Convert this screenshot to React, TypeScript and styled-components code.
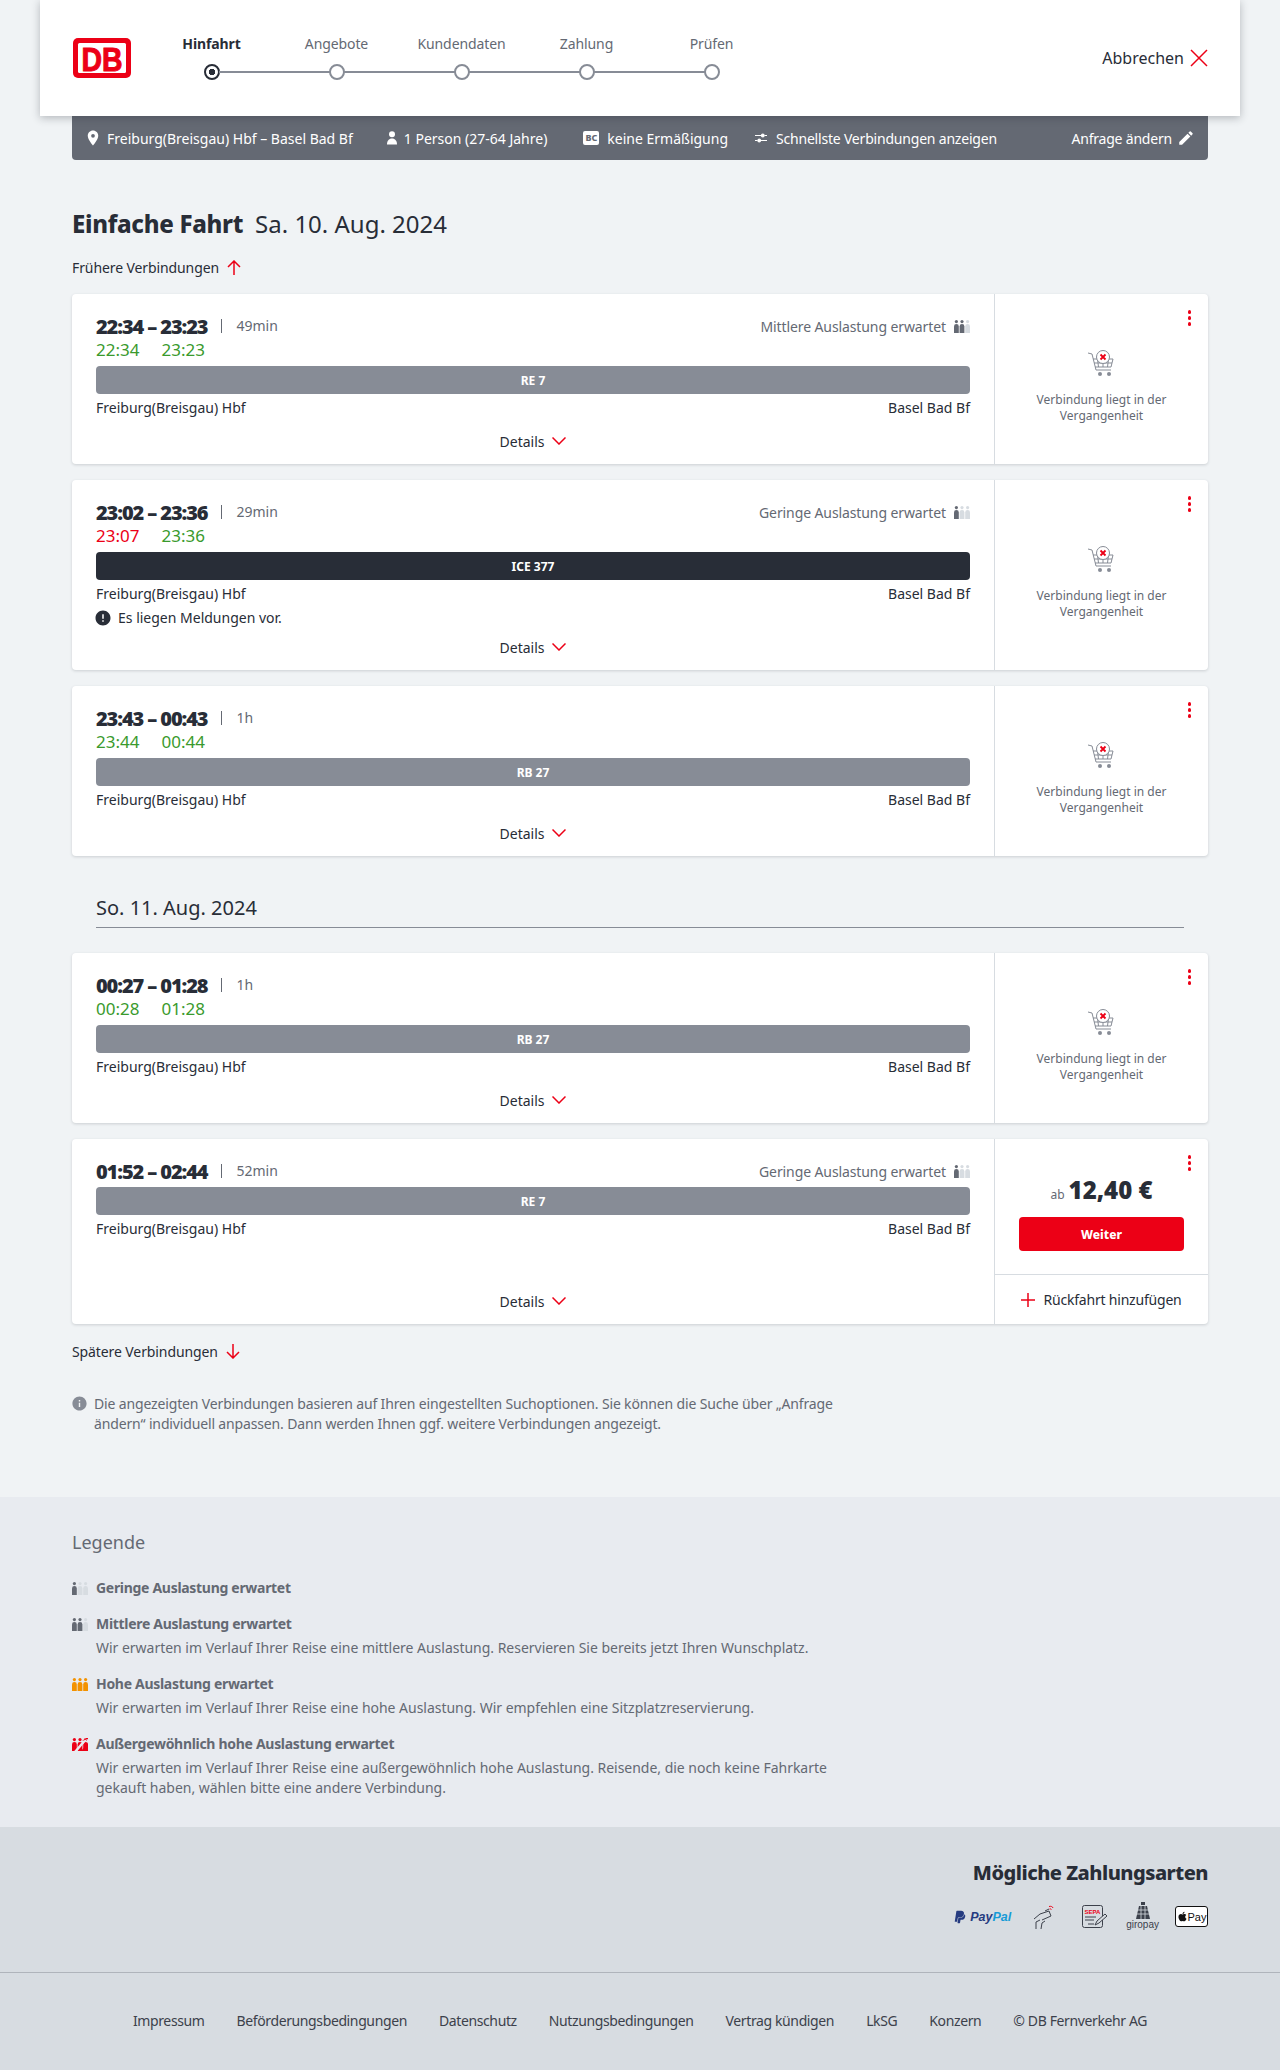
import React from 'react'
import styled, { createGlobalStyle } from 'styled-components'
import { MdEdit, MdError, MdInfo, MdLocationOn } from 'react-icons/md'
import { FaApple, FaPaypal } from 'react-icons/fa'

const RED = '#ec0016'
const DARK = '#282d37'
const GREY = '#646973'

const GlobalStyle = createGlobalStyle`
    html, body {
        margin: 0;
        padding: 0;
        background: #f0f3f5;
    }
    body {
        font-family: 'Noto Sans', 'Liberation Sans', sans-serif;
        font-size: 14px;
        color: ${DARK};
    }
    * {
        box-sizing: border-box;
    }
`

type Load = 'low' | 'mid' | 'high' | 'max'

const loadColours: Record<Load, string[]> = {
    low: [GREY, '#d7dce1', '#d7dce1'],
    mid: [GREY, GREY, '#d7dce1'],
    high: ['#f39200', '#f39200', '#f39200'],
    max: [RED, RED, RED],
}

const LoadIcon: React.FC<{ level: Load }> = ({ level }) => {
    const c = loadColours[level]
    return (
        <svg width="16" height="13" viewBox="0 0 16 13">
            {[0, 5.6, 11.2].map((x, i) => (
                <g key={x} fill={c[i]}>
                    <circle cx={x + 2.4} cy="1.6" r="1.6" />
                    <path d={`M${x} 6.5a2.4 2.4 0 0 1 4.8 0V13H${x}z`} />
                </g>
            ))}
            {level === 'max' && (
                <>
                    <path d="M3 14L15 0" stroke="#e8ebf0" strokeWidth="2.4" />
                    <path d="M9 13L16 5v8zM10 3l4-3h2v1z" fill={RED} />
                </>
            )}
        </svg>
    )
}

const RedLine: React.FC<{ w: number; h: number; d: string }> = ({ w, h, d }) => (
    <svg width={w} height={h} viewBox={`0 0 ${w} ${h}`} fill="none" stroke={RED} strokeWidth="1.5">
        <path d={d} />
    </svg>
)

const CloseIcon = () => <RedLine w={18} h={18} d="M1 1l16 16M17 1L1 17" />
const UpIcon = () => <RedLine w={14} h={15} d="M7 15V1M1 7l6-6 6 6" />
const DownIcon = () => <RedLine w={14} h={15} d="M7 0v14M1 8l6 6 6-6" />
const ChevronIcon = () => <RedLine w={14} h={8} d="M.5 .5L7 7l6.500-6.500" />
const PlusIcon = () => <RedLine w={14} h={14} d="M7 0v14M0 7h14" />

const PersonIcon = () => (
    <svg width="12" height="14" viewBox="0 0 12 14" fill="#fff">
        <circle cx="6" cy="3.2" r="3" />
        <path d="M1 13.5c0-3.500 1.800-6 5-6s5 2.500 5 6z" />
    </svg>
)

const SwapIcon = () => (
    <svg width="12" height="10" viewBox="0 0 12 10" fill="#fff" stroke="#fff" strokeWidth="1.2">
        <path d="M0 2.500h6M12 2.500H9.500M0 7.500h2.500M6 7.500h6" fill="none" />
        <circle cx="7.800" cy="2.500" r="1.300" />
        <circle cx="4.200" cy="7.500" r="1.300" />
    </svg>
)

const CartIcon = () => (
    <svg width="27" height="27" viewBox="0 0 27 27" fill="none" stroke="#878c96" strokeWidth="1">
        <path d="M0 3l4 1 4 16h15" />
        <path d="M5 9h20l-2 8H7M9.500 9l1 8M20.500 9l-1 8M15 9v8M6 13h18" />
        <circle cx="12" cy="24" r="2" fill="#878c96" stroke="none" />
        <circle cx="21" cy="24" r="2" fill="#878c96" stroke="none" />
        <circle cx="15" cy="7" r="6.500" fill="#fff" />
        <path d="M12.500 4.500l5 5M17.500 4.500l-5 5" stroke={RED} strokeWidth="1.800" />
    </svg>
)

const DbLogo = () => (
    <svg width="58" height="40" viewBox="0 0 58 40">
        <rect x="0" y="0" width="58" height="40" rx="5" fill={RED} />
        <rect x="5" y="5" width="48" height="30" rx="1.500" fill="#fff" />
        <text
            x="29"
            y="32.500"
            textAnchor="middle"
            fontFamily="'Liberation Sans', sans-serif"
            fontWeight="700"
            fontSize="33"
            fill={RED}
            stroke={RED}
            strokeWidth="1"
            textLength="41"
            lengthAdjust="spacingAndGlyphs"
        >
            DB
        </text>
    </svg>
)

const HandIcon = () => (
    <svg width="22" height="24" viewBox="0 0 22 24" fill="none" stroke="#3c414b" strokeWidth="1">
        <path d="M1 14l6-5 9-3 2 5-9 4" />
        <path d="M3 24v-7l4-2M8 24l1-6 3-2M12 6l4-2" />
        <path d="M16 1.500c2-.5 3.500 0 4 1.500M16.500 4c1-.4 1.500 0 2 .7" stroke={RED} />
    </svg>
)

const SepaIcon = () => (
    <svg width="26" height="24" viewBox="0 0 26 24" fill="none">
        <rect x=".5" y=".5" width="20" height="22" rx="2" stroke="#3c414b" />
        <text x="10.500" y="8.500" textAnchor="middle" fontSize="6" fontWeight="700" fill={RED} fontFamily="'Liberation Sans', sans-serif">
            SEPA
        </text>
        <path d="M3 12h11M3 15h9M6 19h6" stroke="#3c414b" />
        <path d="M13 20l2-4 8-7 2 2-8 7z" fill="#d7dce1" stroke="#3c414b" />
    </svg>
)

const GiroTower = () => (
    <svg width="16" height="17" viewBox="0 0 16 17">
        <rect x="6" y="0" width="4" height="3" fill="#3c414b" />
        <path d="M4 4h8l3 13H1z" fill="#3c414b" />
        <path d="M6 4v13M10 4v13M3 8h10M2 12h12" stroke="#d7dce1" strokeWidth=".8" />
    </svg>
)

const Stepper = styled.ol`
    display: flex;
    list-style: none;
    margin: 0 0 2px 18px;
    padding: 0;
    width: 625px;
`

const Step = styled.li`
    flex: 0 0 125px;
    display: flex;
    flex-direction: column;
    align-items: center;
    position: relative;
`

const StepLabel = styled.span<{ $active?: boolean }>`
    font-size: 14px;
    line-height: 20px;
    font-weight: ${p => (p.$active ? 700 : 400)};
    color: ${p => (p.$active ? DARK : GREY)};
    margin-bottom: 10px;
    letter-spacing: -0.1px;
`

const StepDot = styled.span<{ $active?: boolean; $last?: boolean }>`
    width: 16px;
    height: 16px;
    border-radius: 50%;
    background: ${p => (p.$active ? `radial-gradient(circle, ${DARK} 0 3px, #fff 3.500px)` : '#fff')};
    border: 2px solid ${p => (p.$active ? DARK : '#878c96')};
    z-index: 1;

    ${p =>
        !p.$last &&
        `&::after {
            content: '';
            position: absolute;
            left: calc(50% + 7px);
            width: 111px;
            bottom: 7px;
            height: 2px;
            background: #878c96;
        }`}
`

const Header = styled.header`
    position: relative;
    z-index: 2;
    margin: 0 40px;
    height: 116px;
    background: #fff;
    box-shadow: 0 2px 8px rgba(40, 45, 55, 0.3);
    display: flex;
    align-items: center;
    padding: 0 32px 0 33px;
`

const Cancel = styled.div`
    margin-left: auto;
    display: flex;
    align-items: center;
    gap: 6px;
    font-size: 16px;
`

const Summary = styled.div`
    margin: 0 72px;
    height: 44px;
    background: ${GREY};
    border-radius: 0 0 4px 4px;
    color: #fff;
    display: flex;
    align-items: center;
    padding: 0 13px 0 12px;
    font-size: 14px;
`

const SummaryItem = styled.span<{ $gap?: number; $end?: boolean; $tight?: boolean; $iconGap?: number }>`
    display: inline-flex;
    align-items: center;
    gap: ${p => p.$iconGap ?? 5}px;
    margin-left: ${p => (p.$end ? 'auto' : `${p.$gap ?? 0}px`)};
    letter-spacing: ${p => (p.$tight ? '-0.2px' : '0')};
`

const BcBadge = styled.span`
    display: inline-block;
    background: #fff;
    color: ${GREY};
    font-size: 9px;
    font-weight: 800;
    line-height: 13px;
    width: 16px;
    height: 14px;
    border-radius: 2px;
    text-align: center;
    margin-right: 3px;
`

const Main = styled.main`
    padding: 48px 72px 0;
`

const Title = styled.h1`
    margin: 0;
    font-size: 24px;
    line-height: 32px;
    font-weight: 400;
    display: flex;
    gap: 12px;
`

const TitleStrong = styled.strong`
    font-weight: 800;
    letter-spacing: -0.3px;
`

const MoreLink = styled.div<{ $top: number; $bottom: number }>`
    display: flex;
    align-items: center;
    gap: 8px;
    height: 24px;
    margin: ${p => p.$top}px 0 ${p => p.$bottom}px;
    font-size: 14px;
    letter-spacing: -0.1px;
`

const CardList = styled.div`
    display: flex;
    flex-direction: column;
    gap: 16px;
`

const Card = styled.article`
    display: flex;
    background: #fff;
    border-radius: 4px;
    box-shadow: 0 1px 3px rgba(40, 45, 55, 0.18);
`

const Journey = styled.div`
    flex: 1;
    min-width: 0;
    padding: 19px 24px 0;
    display: flex;
    flex-direction: column;
    border-right: 1px solid #d7dce1;
`

const TimeRow = styled.div`
    display: flex;
    align-items: center;
    height: 26px;
`

const Times = styled.strong`
    font-size: 20px;
    font-weight: 900;
    letter-spacing: -1.1px;
`

const Duration = styled.span`
    color: ${GREY};
    font-size: 14px;
    margin-left: 14px;
    border-left: 1px solid ${GREY};
    padding-left: 14px;
    line-height: 14px;
`

const LoadLabel = styled.span`
    margin-left: auto;
    color: ${GREY};
    font-size: 14px;
    letter-spacing: -0.1px;
    display: flex;
    align-items: center;
    gap: 8px;
`

const Realtime = styled.div`
    display: flex;
    gap: 22px;
    height: 24px;
    padding-bottom: 3px;
    align-items: center;
    font-size: 17px;
`

const Clock = styled.span<{ $late?: boolean }>`
    color: ${p => (p.$late ? RED : '#3a9a2d')};
`

const Bar = styled.div<{ $dark?: boolean }>`
    margin-top: 3px;
    height: 28px;
    border-radius: 4px;
    background: ${p => (p.$dark ? DARK : '#878c96')};
    color: #fff;
    font-size: 12px;
    font-weight: 700;
    display: flex;
    align-items: center;
    justify-content: center;
`

const Stations = styled.div`
    display: flex;
    justify-content: space-between;
    line-height: 20px;
    margin-top: 4px;
`

const Notice = styled.div`
    display: flex;
    align-items: center;
    gap: 6px;
    margin: 4px 0 -4px -2px;
    line-height: 20px;
`

const Details = styled.div`
    margin-top: auto;
    height: 46px;
    display: flex;
    align-items: center;
    justify-content: center;
    gap: 8px;
    font-size: 14px;
`

const Side = styled.aside`
    flex: 0 0 213px;
    position: relative;
    display: flex;
    flex-direction: column;
`

const Dots = styled.span`
    position: absolute;
    top: 16px;
    right: 17px;
    display: flex;
    flex-direction: column;
    gap: 2.500px;

    & > i {
        width: 3.500px;
        height: 3.500px;
        border-radius: 50%;
        background: ${RED};
    }
`

const PastPanel = styled.div`
    flex: 1;
    display: flex;
    flex-direction: column;
    align-items: center;
    justify-content: center;
    padding: 15px 24px 0;
    text-align: center;
    color: ${GREY};
    font-size: 12px;
    line-height: 16px;
    gap: 15px;
`

const OfferPanel = styled.div`
    height: 136px;
    padding: 33px 24px 0;
    display: flex;
    flex-direction: column;
    align-items: center;
    border-bottom: 1px solid #d7dce1;
`

const Price = styled.div`
    display: flex;
    align-items: baseline;
    justify-content: center;
    gap: 4px;
    height: 36px;
    line-height: 36px;
    font-size: 24px;
    font-weight: 900;
    margin-bottom: 9px;
`

const PriceFrom = styled.small`
    font-size: 12px;
    font-weight: 400;
    color: ${GREY};
`

const Continue = styled.button`
    width: 165px;
    height: 34px;
    border: 0;
    border-radius: 4px;
    background: ${RED};
    color: #fff;
    font-family: inherit;
    font-size: 12px;
    font-weight: 800;
`

const ReturnRow = styled.div`
    height: 49px;
    display: flex;
    align-items: center;
    justify-content: center;
    gap: 8px;
    font-size: 14px;
    letter-spacing: -0.2px;
`

const DateHeading = styled.h2`
    margin: 22px 24px 9px;
    padding: 0 0 5px;
    font-size: 20px;
    line-height: 28px;
    font-weight: 400;
    border-bottom: 1px solid #878c96;
`

const Info = styled.p`
    display: flex;
    gap: 6px;
    width: 775px;
    margin: 31px 0 0;
    color: ${GREY};
    line-height: 20px;
    letter-spacing: -0.15px;
`

const InfoGlyph = styled.span`
    flex: none;
    margin: 1px 0 0 -1px;
`

const Legend = styled.section`
    margin-top: 63px;
    background: #e8ebf0;
    padding: 31px 72px 20px;
    height: 330px;
    color: ${GREY};
`

const LegendTitle = styled.h3`
    margin: 0 0 22px;
    font-size: 18px;
    line-height: 28px;
    font-weight: 400;
`

const LegendItem = styled.div`
    display: grid;
    grid-template-columns: 16px 1fr;
    column-gap: 8px;
    width: 790px;
    margin-bottom: 16px;
    align-items: center;
    line-height: 20px;
`

const LegendName = styled.strong`
    font-weight: 700;
    letter-spacing: -0.3px;
`

const LegendText = styled.p`
    grid-column: 2;
    margin: 4px 0 0;
    letter-spacing: -0.02px;
`

const Payment = styled.section`
    background: #d7dce1;
    height: 146px;
    padding: 30px 72px 0;
    border-bottom: 1px solid #afb4bb;
    display: flex;
    flex-direction: column;
    align-items: flex-end;
`

const PaymentTitle = styled.h3`
    margin: 0 0 13px;
    font-size: 20px;
    line-height: 32px;
    font-weight: 800;
    letter-spacing: -0.5px;
`

const PaymentRow = styled.div`
    display: flex;
    align-items: center;
`

const PayItem = styled.span<{ $after?: number }>`
    display: flex;
    margin-right: ${p => p.$after ?? 0}px;
`

const PayPalMark = styled.span`
    font-family: 'Liberation Sans', sans-serif;
    font-style: italic;
    font-weight: 700;
    font-size: 12.5px;
    color: #253b80;
    display: flex;
    align-items: center;
    gap: 3px;

    & b {
        color: #179bd7;
    }
`

const Giropay = styled.span`
    display: flex;
    flex-direction: column;
    align-items: center;
    font-family: 'Liberation Sans', sans-serif;
    font-size: 10px;
    line-height: 12px;
    color: #3c414b;
`

const ApplePay = styled.span`
    width: 33px;
    height: 21px;
    border: 1px solid #111;
    border-radius: 3px;
    background: #fff;
    color: #111;
    font-family: 'Liberation Sans', sans-serif;
    font-size: 11px;
    display: flex;
    align-items: center;
    justify-content: center;
`

const Footer = styled.footer`
    background: #d7dce1;
    height: 97px;
    padding-bottom: 3px;
    display: flex;
    align-items: center;
    justify-content: center;
    gap: 32px;
    font-size: 14px;
    letter-spacing: -0.38px;
    color: #3c414b;
`

interface Connection {
    times: string
    duration: string
    load?: Load
    realtime?: { from: string; to: string; late?: boolean }
    train: string
    dark?: boolean
    notice?: boolean
    offer?: boolean
}

const loadText: Record<Load, string> = {
    low: 'Geringe Auslastung erwartet',
    mid: 'Mittlere Auslastung erwartet',
    high: 'Hohe Auslastung erwartet',
    max: 'Außergewöhnlich hohe Auslastung erwartet',
}

const saturday: Connection[] = [
    { times: '22:34 – 23:23', duration: '49min', load: 'mid', realtime: { from: '22:34', to: '23:23' }, train: 'RE 7' },
    { times: '23:02 – 23:36', duration: '29min', load: 'low', realtime: { from: '23:07', to: '23:36', late: true }, train: 'ICE 377', dark: true, notice: true },
    { times: '23:43 – 00:43', duration: '1h', realtime: { from: '23:44', to: '00:44' }, train: 'RB 27' },
]

const sunday: Connection[] = [
    { times: '00:27 – 01:28', duration: '1h', realtime: { from: '00:28', to: '01:28' }, train: 'RB 27' },
    { times: '01:52 – 02:44', duration: '52min', load: 'low', train: 'RE 7', offer: true },
]

const ConnectionCard: React.FC<{ item: Connection }> = ({ item }) => (
    <Card>
        <Journey>
            <TimeRow>
                <Times>{item.times}</Times>
                <Duration>{item.duration}</Duration>
                {item.load && (
                    <LoadLabel>
                        {loadText[item.load]} <LoadIcon level={item.load} />
                    </LoadLabel>
                )}
            </TimeRow>
            {item.realtime && (
                <Realtime>
                    <Clock $late={item.realtime.late}>{item.realtime.from}</Clock>
                    <Clock>{item.realtime.to}</Clock>
                </Realtime>
            )}
            <Bar $dark={item.dark}>{item.train}</Bar>
            <Stations>
                <span>Freiburg(Breisgau) Hbf</span>
                <span>Basel Bad Bf</span>
            </Stations>
            {item.notice && (
                <Notice>
                    <MdError size={18} color={DARK} /> Es liegen Meldungen vor.
                </Notice>
            )}
            <Details>
                Details <ChevronIcon />
            </Details>
        </Journey>
        <Side>
            <Dots>
                <i />
                <i />
                <i />
            </Dots>
            {item.offer ? (
                <>
                    <OfferPanel>
                        <Price>
                            <PriceFrom>ab</PriceFrom> 12,40 €
                        </Price>
                        <Continue>Weiter</Continue>
                    </OfferPanel>
                    <ReturnRow>
                        <PlusIcon /> Rückfahrt hinzufügen
                    </ReturnRow>
                </>
            ) : (
                <PastPanel>
                    <CartIcon />
                    <span>Verbindung liegt in der Vergangenheit</span>
                </PastPanel>
            )}
        </Side>
    </Card>
)

const steps = ['Hinfahrt', 'Angebote', 'Kundendaten', 'Zahlung', 'Prüfen']

const footerLinks = [
    'Impressum',
    'Beförderungsbedingungen',
    'Datenschutz',
    'Nutzungsbedingungen',
    'Vertrag kündigen',
    'LkSG',
    'Konzern',
    '© DB Fernverkehr AG',
]

const App: React.FC = () => {
    return (
        <>
            <GlobalStyle />
            <Header>
                <DbLogo />
                <Stepper>
                    {steps.map((s, i) => (
                        <Step key={s}>
                            <StepLabel $active={i === 0}>{s}</StepLabel>
                            <StepDot $active={i === 0} $last={i === steps.length - 1} />
                        </Step>
                    ))}
                </Stepper>
                <Cancel>
                    Abbrechen <CloseIcon />
                </Cancel>
            </Header>
            <Summary>
                <SummaryItem>
                    <MdLocationOn size={18} color="#fff" /> Freiburg(Breisgau) Hbf – Basel Bad Bf
                </SummaryItem>
                <SummaryItem $gap={33} $iconGap={6}>
                    <PersonIcon /> 1 Person (27-64 Jahre)
                </SummaryItem>
                <SummaryItem $gap={36}>
                    <BcBadge>BC</BcBadge> keine Ermäßigung
                </SummaryItem>
                <SummaryItem $gap={27} $iconGap={9} $tight>
                    <SwapIcon /> Schnellste Verbindungen anzeigen
                </SummaryItem>
                <SummaryItem $end $tight>
                    Anfrage ändern <MdEdit size={18} color="#fff" />
                </SummaryItem>
            </Summary>
            <Main>
                <Title>
                    <TitleStrong>Einfache Fahrt</TitleStrong> Sa. 10. Aug. 2024
                </Title>
                <MoreLink $top={15} $bottom={15}>
                    Frühere Verbindungen <UpIcon />
                </MoreLink>
                <CardList>
                    {saturday.map(c => (
                        <ConnectionCard key={c.times} item={c} />
                    ))}
                    <DateHeading>So. 11. Aug. 2024</DateHeading>
                    {sunday.map(c => (
                        <ConnectionCard key={c.times} item={c} />
                    ))}
                </CardList>
                <MoreLink $top={15} $bottom={0}>
                    Spätere Verbindungen <DownIcon />
                </MoreLink>
                <Info>
                    <InfoGlyph>
                        <MdInfo size={17} color="#878c96" />
                    </InfoGlyph>
                    <span>
                        Die angezeigten Verbindungen basieren auf Ihren eingestellten Suchoptionen. Sie können die Suche über „Anfrage ändern“ individuell anpassen. Dann werden Ihnen ggf. weitere Verbindungen angezeigt.
                    </span>
                </Info>
            </Main>
            <Legend>
                <LegendTitle>Legende</LegendTitle>
                <LegendItem>
                    <LoadIcon level="low" />
                    <LegendName>{loadText.low}</LegendName>
                </LegendItem>
                <LegendItem>
                    <LoadIcon level="mid" />
                    <LegendName>{loadText.mid}</LegendName>
                    <LegendText>Wir erwarten im Verlauf Ihrer Reise eine mittlere Auslastung. Reservieren Sie bereits jetzt Ihren Wunschplatz.</LegendText>
                </LegendItem>
                <LegendItem>
                    <LoadIcon level="high" />
                    <LegendName>{loadText.high}</LegendName>
                    <LegendText>Wir erwarten im Verlauf Ihrer Reise eine hohe Auslastung. Wir empfehlen eine Sitzplatzreservierung.</LegendText>
                </LegendItem>
                <LegendItem>
                    <LoadIcon level="max" />
                    <LegendName>{loadText.max}</LegendName>
                    <LegendText>Wir erwarten im Verlauf Ihrer Reise eine außergewöhnlich hohe Auslastung. Reisende, die noch keine Fahrkarte gekauft haben, wählen bitte eine andere Verbindung.</LegendText>
                </LegendItem>
            </Legend>
            <Payment>
                <PaymentTitle>Mögliche Zahlungsarten</PaymentTitle>
                <PaymentRow>
                    <PayItem $after={22}>
                        <PayPalMark>
                            <FaPaypal size={14} />
                            <span>
                                Pay<b>Pal</b>
                            </span>
                        </PayPalMark>
                    </PayItem>
                    <PayItem $after={27}>
                        <HandIcon />
                    </PayItem>
                    <PayItem $after={18}>
                        <SepaIcon />
                    </PayItem>
                    <PayItem $after={16}>
                        <Giropay>
                            <GiroTower />
                            giropay
                        </Giropay>
                    </PayItem>
                    <ApplePay>
                        <FaApple size={11} />
                        Pay
                    </ApplePay>
                </PaymentRow>
            </Payment>
            <Footer>
                {footerLinks.map(l => (
                    <span key={l}>{l}</span>
                ))}
            </Footer>
        </>
    )
}

export default App
